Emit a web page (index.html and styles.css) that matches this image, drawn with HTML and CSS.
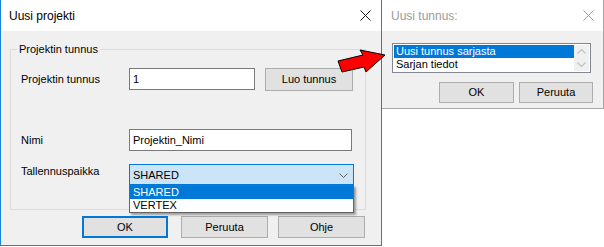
FILE: index.html
```html
<!DOCTYPE html>
<html>
<head>
<meta charset="utf-8">
<link rel="stylesheet" href="styles.css">
</head>
<body>
<div class="screen">
  <div class="dlg dlg-main">
    <div class="titlebar">
      <span class="title">Uusi projekti</span>
      <svg class="close" width="11" height="11" viewBox="0 0 11 11"><path d="M0.5 0.5L10.5 10.5M10.5 0.5L0.5 10.5" stroke="#1a1a1a" stroke-width="1"/></svg>
    </div>
    <div class="group">
      <div class="legend">Projektin tunnus</div>
      <div class="row row1">
        <div class="label lh22">Projektin tunnus</div>
        <div class="textbox tb-id">1</div>
        <div class="btn btn-gen">Luo tunnus</div>
      </div>
      <div class="row row2">
        <div class="label lh22">Nimi</div>
        <div class="textbox tb-name">Projektin_Nimi</div>
      </div>
      <div class="row row3">
        <div class="label lh15">Tallennuspaikka</div>
        <div class="combo">
          <span>SHARED</span>
          <svg class="chev" width="9" height="5" viewBox="0 0 9 5"><path d="M0.5 0.5L4.5 4.5L8.5 0.5" fill="none" stroke="#606060" stroke-width="1"/></svg>
          <div class="droplist">
            <div class="item sel">SHARED</div>
            <div class="item">VERTEX</div>
          </div>
        </div>
      </div>
    </div>
    <div class="buttons">
      <div class="btn btn-ok default">OK</div>
      <div class="btn btn-cancel">Peruuta</div>
      <div class="btn btn-help">Ohje</div>
    </div>
  </div>
  <div class="dlg dlg-sub">
    <div class="titlebar inactive">
      <span class="title">Uusi tunnus:</span>
      <svg class="close" width="11" height="11" viewBox="0 0 11 11"><path d="M0.5 0.5L10.5 10.5M10.5 0.5L0.5 10.5" stroke="#9a9a9a" stroke-width="1"/></svg>
    </div>
    <div class="listbox">
      <div class="items">
        <div class="item sel">Uusi tunnus sarjasta</div>
        <div class="item">Sarjan tiedot</div>
      </div>
      <div class="scroll">
        <div class="sbtn"><svg width="9" height="5" viewBox="0 0 9 5"><path d="M0.5 4.5L4.5 0.5L8.5 4.5" fill="none" stroke="#c2c2c2" stroke-width="1.2"/></svg></div>
        <div class="sbtn"><svg width="9" height="5" viewBox="0 0 9 5"><path d="M0.5 0.5L4.5 4.5L8.5 0.5" fill="none" stroke="#c2c2c2" stroke-width="1.2"/></svg></div>
      </div>
    </div>
    <div class="buttons sub-buttons">
      <div class="btn btn-sok">OK</div>
      <div class="btn btn-scancel">Peruuta</div>
    </div>
  </div>
  <svg class="arrow" width="52" height="28" viewBox="0 0 52 28"><polygon points="2,13 27,7 24,2 49,7 30,24 28,19 6,24" fill="#ff0000" stroke="#000" stroke-width="1" stroke-linejoin="miter"/></svg>
</div>
</body>
</html>
```
FILE: styles.css
```css
* { box-sizing: border-box; }
html, body { margin: 0; padding: 0; background: #fff; }
body {
  font-family: "Liberation Sans", Arial, sans-serif;
  font-size: 11px;
  color: #000;
}
.screen {
  position: relative;
  width: 604px;
  height: 247px;
  display: flex;
  align-items: flex-start;
}
.dlg {
  background: #f0f0f0;
  display: flex;
  flex-direction: column;
}
.dlg-main {
  width: 382px;
  height: 246px;
  border: 1px solid #1883d7;
  border-top: none;
}
.dlg-sub {
  width: 222px;
  height: 109px;
  border: 1px solid #a6a6a6;
  border-top: none;
  border-left: none;
}
.titlebar {
  height: 31px;
  background: #fff;
  display: flex;
  align-items: center;
  justify-content: space-between;
  padding: 0 10px 0 8px;
}
.titlebar .title {
  font-size: 12px;
  line-height: 16px;
}
.titlebar .close { display: block; }
.dlg-main .titlebar .close { margin-top: -1px; }
.titlebar.inactive { padding: 0 9px 0 9px; }
.titlebar.inactive .title { color: #9a9a9a; }
.group {
  margin: 18px 15px 0 9px;
  height: 161px;
  border: 1px solid #dcdcdc;
}
.legend {
  width: max-content;
  margin: -7px 0 0 6px;
  padding: 0 2px;
  background: #f0f0f0;
  line-height: 13px;
}
.row {
  display: flex;
  align-items: flex-start;
  padding-left: 10px;
}
.row1 { margin-top: 12px; }
.row2 { margin-top: 38px; }
.row3 { margin-top: 13px; }
.label { width: 108px; }
.lh22 { line-height: 22px; }
.lh15 { line-height: 15px; }
.textbox {
  height: 22px;
  background: #fff;
  border: 1px solid #7a7a7a;
  padding-left: 3px;
  line-height: 20px;
}
.tb-id { width: 126px; }
.tb-name { width: 223px; }
.btn {
  background: #e1e1e1;
  border: 1px solid #adadad;
  display: flex;
  align-items: center;
  justify-content: center;
  line-height: 13px;
}
.btn-gen { width: 88px; height: 23px; margin-left: 10px; }
.combo {
  position: relative;
  width: 225px;
  height: 21px;
  background: #cce4f7;
  border: 1px solid #0078d7;
  display: flex;
  align-items: center;
  justify-content: space-between;
  padding: 0 5px 0 3px;
}
.chev { display: block; margin-top: 1px; }
.droplist {
  position: absolute;
  left: -1px;
  top: 20px;
  width: 225px;
  border: 1px solid #646464;
  background: #fff;
  box-shadow: 2px 2px 2px rgba(0, 0, 0, 0.35);
}
.item {
  height: 13px;
  line-height: 13px;
  padding-left: 3px;
  white-space: nowrap;
}
.item.sel { background: #0078d7; color: #fff; }
.buttons {
  display: flex;
  justify-content: flex-end;
  margin-top: 6px;
  padding-right: 16px;
}
.btn-ok { width: 86px; height: 22px; margin-right: 13px; }
.btn-ok.default { border: 2px solid #0078d7; }
.btn-cancel { width: 87px; height: 22px; margin-right: 10px; }
.btn-help { width: 87px; height: 22px; }
.listbox {
  margin: 12px 0 0 10px;
  width: 199px;
  height: 30px;
  border: 1px solid #828790;
  background: #fff;
  padding: 1px;
  display: flex;
}
.listbox .items { flex: 1; }
.listbox .item { padding-left: 2px; }
.scroll {
  width: 15px;
  display: flex;
  flex-direction: column;
  background: #f0f0f0;
}
.sbtn {
  height: 13px;
  display: flex;
  align-items: center;
  justify-content: center;
}
.sub-buttons {
  margin-top: 9px;
  padding-right: 10px;
}
.btn-sok { width: 75px; height: 21px; margin-right: 5px; }
.btn-scancel { width: 74px; height: 21px; }
.arrow {
  position: absolute;
  left: 336px;
  top: 48px;
}
```
